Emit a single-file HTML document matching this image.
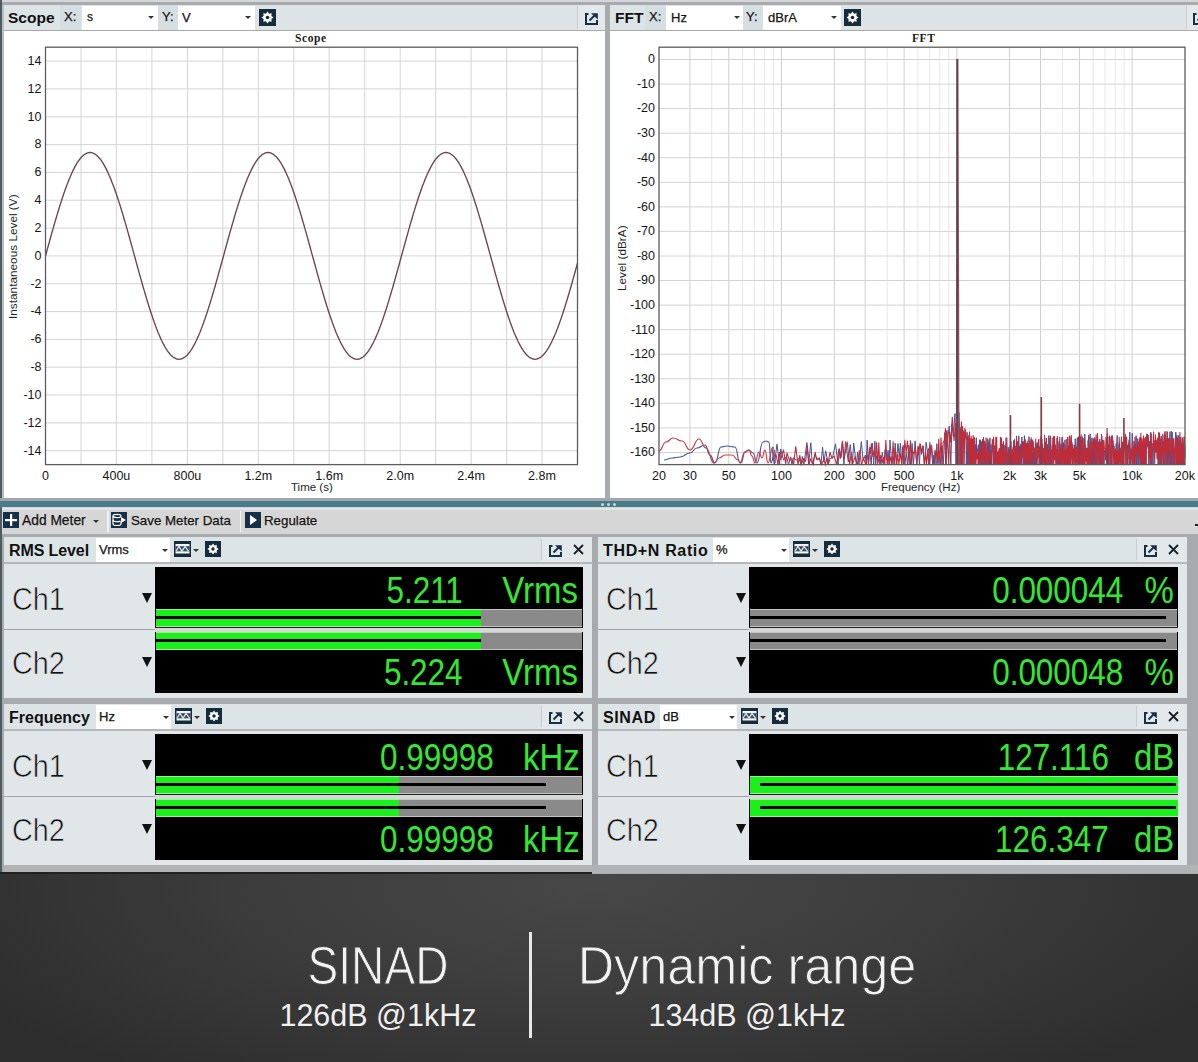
<!DOCTYPE html><html><head><meta charset="utf-8"><style>
*{margin:0;padding:0;box-sizing:border-box}
html,body{width:1198px;height:1062px;overflow:hidden;background:#a7abad;font-family:"Liberation Sans", sans-serif}
.a{position:absolute;white-space:nowrap}
.tk{font-family:"Liberation Sans", sans-serif;font-size:12.5px;fill:#151515}
.hd{background:#dde4e6}
.bt{font-weight:bold;font-size:15.5px;color:#111}
.lbl{font-size:13px;color:#141414;-webkit-text-stroke:0.25px #141414}
.dd{background:#fff}
.ch{font-size:32px;color:#111;-webkit-text-stroke:0.7px #e1e6e8}
.gtxt{font-size:37px;line-height:43px;color:#33e833}
</style></head><body><div class="a" style="left:0;top:0;width:1198px;height:2px;background:#d6d6da"></div><div class="a" style="left:1.5px;top:5px;width:2.5px;height:493px;background:#b8c0c3"></div><div class="a" style="left:0;top:0;width:1.5px;height:874px;background:#4e5c62"></div><div class="a" style="left:4px;top:5px;width:601px;height:25px;background:#dde4e6"></div><div class="a" style="left:4px;top:30px;width:601px;height:1.5px;background:#a9a9a9"></div><div class="a" style="left:4px;top:31px;width:601px;height:467px;background:#fff"></div><div class="a bt" style="left:8px;top:8.5px;">Scope</div><div class="a" style="left:60px;top:5px;width:21px;height:25px;background:#d5dee1"></div><div class="a lbl" style="left:64px;top:9px;">X:</div><div class="a dd" style="left:82px;top:6px;width:76px;height:24px"></div><div class="a lbl" style="left:87px;top:10px;font-size:12px">s</div><div class="a" style="left:148px;top:16px;width:0;height:0;border-left:3px solid transparent;border-right:3px solid transparent;border-top:3px solid #333"></div><div class="a" style="left:158px;top:5px;width:20px;height:25px;background:#d5dee1"></div><div class="a lbl" style="left:162px;top:9px;">Y:</div><div class="a dd" style="left:178px;top:6px;width:77px;height:24px"></div><div class="a lbl" style="left:182px;top:10px;">V</div><div class="a" style="left:245px;top:16px;width:0;height:0;border-left:3px solid transparent;border-right:3px solid transparent;border-top:3px solid #333"></div><div class="a" style="left:258.5px;top:9px"><svg width="17" height="17" viewBox="0 0 16 16"><rect width="16" height="16" fill="#142c3c"/><polygon points="8.00,2.40 9.49,4.40 11.96,4.04 11.60,6.51 13.60,8.00 11.60,9.49 11.96,11.96 9.49,11.60 8.00,13.60 6.51,11.60 4.04,11.96 4.40,9.49 2.40,8.00 4.40,6.51 4.04,4.04 6.51,4.40" fill="#fff"/><circle cx="8" cy="8" r="1.7" fill="#142c3c"/></svg></div><div class="a" style="left:578px;top:5px;width:27px;height:25px;background:#e3e9eb"></div><div class="a" style="left:577px;top:6px;width:1px;height:23px;background:#c8cdd0"></div><div class="a" style="left:585px;top:11px"><svg width="13" height="12" viewBox="0 0 13 12"><path d="M1 2 V11 H12 V7" fill="none" stroke="#16304a" stroke-width="2"/><path d="M0 1 H3.5" stroke="#16304a" stroke-width="2"/><path d="M4.5 7.5 L10 2" stroke="#16304a" stroke-width="1.9"/><path d="M6 0.2 H12.8 V6.5 Z" fill="#16304a"/></svg></div><div class="a" style="left:295px;top:32px;font-family:'Liberation Serif',serif;font-weight:bold;font-size:11.5px;letter-spacing:0.6px;color:#1a1a1a">Scope</div><div class="a" style="left:6px;top:319px;transform:rotate(-90deg);transform-origin:0 0;font-size:11.8px;color:#1e1e1e;white-space:nowrap">Instantaneous Level (V)</div><div class="a" style="left:291px;top:481px;font-size:11.5px;color:#1e1e1e">Time (s)</div><svg class="a" style="left:0;top:0" width="605" height="498"><line x1="81.0" y1="47.2" x2="81.0" y2="464.6" stroke="#d4d4d4" stroke-width="1"/><line x1="116.4" y1="47.2" x2="116.4" y2="464.6" stroke="#d4d4d4" stroke-width="1"/><line x1="151.9" y1="47.2" x2="151.9" y2="464.6" stroke="#d4d4d4" stroke-width="1"/><line x1="187.4" y1="47.2" x2="187.4" y2="464.6" stroke="#d4d4d4" stroke-width="1"/><line x1="222.8" y1="47.2" x2="222.8" y2="464.6" stroke="#d4d4d4" stroke-width="1"/><line x1="258.3" y1="47.2" x2="258.3" y2="464.6" stroke="#d4d4d4" stroke-width="1"/><line x1="293.8" y1="47.2" x2="293.8" y2="464.6" stroke="#d4d4d4" stroke-width="1"/><line x1="329.2" y1="47.2" x2="329.2" y2="464.6" stroke="#d4d4d4" stroke-width="1"/><line x1="364.7" y1="47.2" x2="364.7" y2="464.6" stroke="#d4d4d4" stroke-width="1"/><line x1="400.2" y1="47.2" x2="400.2" y2="464.6" stroke="#d4d4d4" stroke-width="1"/><line x1="435.6" y1="47.2" x2="435.6" y2="464.6" stroke="#d4d4d4" stroke-width="1"/><line x1="471.1" y1="47.2" x2="471.1" y2="464.6" stroke="#d4d4d4" stroke-width="1"/><line x1="506.6" y1="47.2" x2="506.6" y2="464.6" stroke="#d4d4d4" stroke-width="1"/><line x1="542.0" y1="47.2" x2="542.0" y2="464.6" stroke="#d4d4d4" stroke-width="1"/><line x1="45.5" y1="450.7" x2="577.5" y2="450.7" stroke="#d4d4d4" stroke-width="1"/><line x1="45.5" y1="422.9" x2="577.5" y2="422.9" stroke="#d4d4d4" stroke-width="1"/><line x1="45.5" y1="395.0" x2="577.5" y2="395.0" stroke="#d4d4d4" stroke-width="1"/><line x1="45.5" y1="367.2" x2="577.5" y2="367.2" stroke="#d4d4d4" stroke-width="1"/><line x1="45.5" y1="339.4" x2="577.5" y2="339.4" stroke="#d4d4d4" stroke-width="1"/><line x1="45.5" y1="311.6" x2="577.5" y2="311.6" stroke="#d4d4d4" stroke-width="1"/><line x1="45.5" y1="283.7" x2="577.5" y2="283.7" stroke="#d4d4d4" stroke-width="1"/><line x1="45.5" y1="255.9" x2="577.5" y2="255.9" stroke="#d4d4d4" stroke-width="1"/><line x1="45.5" y1="228.1" x2="577.5" y2="228.1" stroke="#d4d4d4" stroke-width="1"/><line x1="45.5" y1="200.2" x2="577.5" y2="200.2" stroke="#d4d4d4" stroke-width="1"/><line x1="45.5" y1="172.4" x2="577.5" y2="172.4" stroke="#d4d4d4" stroke-width="1"/><line x1="45.5" y1="144.6" x2="577.5" y2="144.6" stroke="#d4d4d4" stroke-width="1"/><line x1="45.5" y1="116.8" x2="577.5" y2="116.8" stroke="#d4d4d4" stroke-width="1"/><line x1="45.5" y1="88.9" x2="577.5" y2="88.9" stroke="#d4d4d4" stroke-width="1"/><line x1="45.5" y1="61.1" x2="577.5" y2="61.1" stroke="#d4d4d4" stroke-width="1"/><polyline points="45.5,255.9 46.0,254.1 46.5,252.3 47.0,250.4 47.5,248.6 48.0,246.8 48.5,245.0 49.0,243.2 49.5,241.4 50.0,239.5 50.5,237.7 51.0,236.0 51.5,234.2 52.0,232.4 52.5,230.6 53.0,228.9 53.5,227.1 54.0,225.3 54.5,223.6 55.0,221.9 55.5,220.2 56.0,218.5 56.5,216.8 57.0,215.1 57.5,213.4 58.0,211.8 58.5,210.1 59.0,208.5 59.5,206.9 60.0,205.3 60.5,203.7 61.0,202.1 61.5,200.6 62.0,199.0 62.5,197.5 63.0,196.0 63.5,194.5 64.0,193.1 64.5,191.7 65.0,190.2 65.5,188.8 66.0,187.5 66.5,186.1 67.0,184.8 67.5,183.4 68.0,182.2 68.5,180.9 69.0,179.6 69.5,178.4 70.0,177.2 70.5,176.1 71.0,174.9 71.5,173.8 72.0,172.7 72.5,171.6 73.0,170.6 73.5,169.6 74.0,168.6 74.5,167.6 75.0,166.7 75.5,165.8 76.0,164.9 76.5,164.0 77.0,163.2 77.5,162.4 78.0,161.7 78.5,160.9 79.0,160.2 79.5,159.5 80.0,158.9 80.5,158.3 81.0,157.7 81.5,157.1 82.0,156.6 82.5,156.1 83.0,155.7 83.5,155.2 84.0,154.8 84.5,154.5 85.0,154.1 85.5,153.8 86.0,153.6 86.5,153.3 87.0,153.1 87.5,152.9 88.0,152.8 88.5,152.7 89.0,152.6 89.5,152.5 90.0,152.5 90.5,152.5 91.0,152.6 91.5,152.7 92.0,152.8 92.5,152.9 93.0,153.1 93.5,153.3 94.0,153.6 94.5,153.8 95.0,154.1 95.5,154.5 96.0,154.8 96.5,155.2 97.0,155.7 97.5,156.1 98.0,156.6 98.5,157.1 99.0,157.7 99.5,158.3 100.0,158.9 100.5,159.5 101.0,160.2 101.5,160.9 102.0,161.7 102.5,162.4 103.0,163.2 103.5,164.0 104.0,164.9 104.5,165.8 105.0,166.7 105.5,167.6 106.0,168.6 106.5,169.6 107.0,170.6 107.5,171.6 108.0,172.7 108.5,173.8 109.0,174.9 109.5,176.1 110.0,177.2 110.5,178.4 111.0,179.6 111.5,180.9 112.0,182.2 112.5,183.4 113.0,184.8 113.5,186.1 114.0,187.5 114.5,188.8 115.0,190.2 115.5,191.7 116.0,193.1 116.5,194.5 117.0,196.0 117.5,197.5 118.0,199.0 118.5,200.6 119.0,202.1 119.5,203.7 120.0,205.3 120.5,206.9 121.0,208.5 121.5,210.1 122.0,211.8 122.5,213.4 123.0,215.1 123.5,216.8 124.0,218.5 124.5,220.2 125.0,221.9 125.5,223.6 126.0,225.3 126.5,227.1 127.0,228.9 127.5,230.6 128.0,232.4 128.5,234.2 129.0,236.0 129.5,237.7 130.0,239.5 130.5,241.4 131.0,243.2 131.5,245.0 132.0,246.8 132.5,248.6 133.0,250.4 133.5,252.3 134.0,254.1 134.5,255.9 135.0,257.7 135.5,259.5 136.0,261.4 136.5,263.2 137.0,265.0 137.5,266.8 138.0,268.6 138.5,270.4 139.0,272.3 139.5,274.1 140.0,275.8 140.5,277.6 141.0,279.4 141.5,281.2 142.0,282.9 142.5,284.7 143.0,286.5 143.5,288.2 144.0,289.9 144.5,291.6 145.0,293.3 145.5,295.0 146.0,296.7 146.5,298.4 147.0,300.0 147.5,301.7 148.0,303.3 148.5,304.9 149.0,306.5 149.5,308.1 150.0,309.7 150.5,311.2 151.0,312.8 151.5,314.3 152.0,315.8 152.5,317.3 153.0,318.7 153.5,320.1 154.0,321.6 154.5,323.0 155.0,324.3 155.5,325.7 156.0,327.0 156.5,328.4 157.0,329.6 157.5,330.9 158.0,332.2 158.5,333.4 159.0,334.6 159.5,335.7 160.0,336.9 160.5,338.0 161.0,339.1 161.5,340.2 162.0,341.2 162.5,342.2 163.0,343.2 163.5,344.2 164.0,345.1 164.5,346.0 165.0,346.9 165.5,347.8 166.0,348.6 166.5,349.4 167.0,350.1 167.5,350.9 168.0,351.6 168.5,352.3 169.0,352.9 169.5,353.5 170.0,354.1 170.5,354.7 171.0,355.2 171.5,355.7 172.0,356.1 172.5,356.6 173.0,357.0 173.5,357.3 174.0,357.7 174.5,358.0 175.0,358.2 175.5,358.5 176.0,358.7 176.5,358.9 177.0,359.0 177.5,359.1 178.0,359.2 178.5,359.3 179.0,359.3 179.5,359.3 180.0,359.2 180.5,359.1 181.0,359.0 181.5,358.9 182.0,358.7 182.5,358.5 183.0,358.2 183.5,358.0 184.0,357.7 184.5,357.3 185.0,357.0 185.5,356.6 186.0,356.1 186.5,355.7 187.0,355.2 187.5,354.7 188.0,354.1 188.5,353.5 189.0,352.9 189.5,352.3 190.0,351.6 190.5,350.9 191.0,350.1 191.5,349.4 192.0,348.6 192.5,347.8 193.0,346.9 193.5,346.0 194.0,345.1 194.5,344.2 195.0,343.2 195.5,342.2 196.0,341.2 196.5,340.2 197.0,339.1 197.5,338.0 198.0,336.9 198.5,335.7 199.0,334.6 199.5,333.4 200.0,332.2 200.5,330.9 201.0,329.6 201.5,328.4 202.0,327.0 202.5,325.7 203.0,324.3 203.5,323.0 204.0,321.6 204.5,320.1 205.0,318.7 205.5,317.3 206.0,315.8 206.5,314.3 207.0,312.8 207.5,311.2 208.0,309.7 208.5,308.1 209.0,306.5 209.5,304.9 210.0,303.3 210.5,301.7 211.0,300.0 211.5,298.4 212.0,296.7 212.5,295.0 213.0,293.3 213.5,291.6 214.0,289.9 214.5,288.2 215.0,286.5 215.5,284.7 216.0,282.9 216.5,281.2 217.0,279.4 217.5,277.6 218.0,275.8 218.5,274.1 219.0,272.3 219.5,270.4 220.0,268.6 220.5,266.8 221.0,265.0 221.5,263.2 222.0,261.4 222.5,259.5 223.0,257.7 223.5,255.9 224.0,254.1 224.5,252.3 225.0,250.4 225.5,248.6 226.0,246.8 226.5,245.0 227.0,243.2 227.5,241.4 228.0,239.5 228.5,237.7 229.0,236.0 229.5,234.2 230.0,232.4 230.5,230.6 231.0,228.9 231.5,227.1 232.0,225.3 232.5,223.6 233.0,221.9 233.5,220.2 234.0,218.5 234.5,216.8 235.0,215.1 235.5,213.4 236.0,211.8 236.5,210.1 237.0,208.5 237.5,206.9 238.0,205.3 238.5,203.7 239.0,202.1 239.5,200.6 240.0,199.0 240.5,197.5 241.0,196.0 241.5,194.5 242.0,193.1 242.5,191.7 243.0,190.2 243.5,188.8 244.0,187.5 244.5,186.1 245.0,184.8 245.5,183.4 246.0,182.2 246.5,180.9 247.0,179.6 247.5,178.4 248.0,177.2 248.5,176.1 249.0,174.9 249.5,173.8 250.0,172.7 250.5,171.6 251.0,170.6 251.5,169.6 252.0,168.6 252.5,167.6 253.0,166.7 253.5,165.8 254.0,164.9 254.5,164.0 255.0,163.2 255.5,162.4 256.0,161.7 256.5,160.9 257.0,160.2 257.5,159.5 258.0,158.9 258.5,158.3 259.0,157.7 259.5,157.1 260.0,156.6 260.5,156.1 261.0,155.7 261.5,155.2 262.0,154.8 262.5,154.5 263.0,154.1 263.5,153.8 264.0,153.6 264.5,153.3 265.0,153.1 265.5,152.9 266.0,152.8 266.5,152.7 267.0,152.6 267.5,152.5 268.0,152.5 268.5,152.5 269.0,152.6 269.5,152.7 270.0,152.8 270.5,152.9 271.0,153.1 271.5,153.3 272.0,153.6 272.5,153.8 273.0,154.1 273.5,154.5 274.0,154.8 274.5,155.2 275.0,155.7 275.5,156.1 276.0,156.6 276.5,157.1 277.0,157.7 277.5,158.3 278.0,158.9 278.5,159.5 279.0,160.2 279.5,160.9 280.0,161.7 280.5,162.4 281.0,163.2 281.5,164.0 282.0,164.9 282.5,165.8 283.0,166.7 283.5,167.6 284.0,168.6 284.5,169.6 285.0,170.6 285.5,171.6 286.0,172.7 286.5,173.8 287.0,174.9 287.5,176.1 288.0,177.2 288.5,178.4 289.0,179.6 289.5,180.9 290.0,182.2 290.5,183.4 291.0,184.8 291.5,186.1 292.0,187.5 292.5,188.8 293.0,190.2 293.5,191.7 294.0,193.1 294.5,194.5 295.0,196.0 295.5,197.5 296.0,199.0 296.5,200.6 297.0,202.1 297.5,203.7 298.0,205.3 298.5,206.9 299.0,208.5 299.5,210.1 300.0,211.8 300.5,213.4 301.0,215.1 301.5,216.8 302.0,218.5 302.5,220.2 303.0,221.9 303.5,223.6 304.0,225.3 304.5,227.1 305.0,228.9 305.5,230.6 306.0,232.4 306.5,234.2 307.0,236.0 307.5,237.7 308.0,239.5 308.5,241.4 309.0,243.2 309.5,245.0 310.0,246.8 310.5,248.6 311.0,250.4 311.5,252.3 312.0,254.1 312.5,255.9 313.0,257.7 313.5,259.5 314.0,261.4 314.5,263.2 315.0,265.0 315.5,266.8 316.0,268.6 316.5,270.4 317.0,272.3 317.5,274.1 318.0,275.8 318.5,277.6 319.0,279.4 319.5,281.2 320.0,282.9 320.5,284.7 321.0,286.5 321.5,288.2 322.0,289.9 322.5,291.6 323.0,293.3 323.5,295.0 324.0,296.7 324.5,298.4 325.0,300.0 325.5,301.7 326.0,303.3 326.5,304.9 327.0,306.5 327.5,308.1 328.0,309.7 328.5,311.2 329.0,312.8 329.5,314.3 330.0,315.8 330.5,317.3 331.0,318.7 331.5,320.1 332.0,321.6 332.5,323.0 333.0,324.3 333.5,325.7 334.0,327.0 334.5,328.4 335.0,329.6 335.5,330.9 336.0,332.2 336.5,333.4 337.0,334.6 337.5,335.7 338.0,336.9 338.5,338.0 339.0,339.1 339.5,340.2 340.0,341.2 340.5,342.2 341.0,343.2 341.5,344.2 342.0,345.1 342.5,346.0 343.0,346.9 343.5,347.8 344.0,348.6 344.5,349.4 345.0,350.1 345.5,350.9 346.0,351.6 346.5,352.3 347.0,352.9 347.5,353.5 348.0,354.1 348.5,354.7 349.0,355.2 349.5,355.7 350.0,356.1 350.5,356.6 351.0,357.0 351.5,357.3 352.0,357.7 352.5,358.0 353.0,358.2 353.5,358.5 354.0,358.7 354.5,358.9 355.0,359.0 355.5,359.1 356.0,359.2 356.5,359.3 357.0,359.3 357.5,359.3 358.0,359.2 358.5,359.1 359.0,359.0 359.5,358.9 360.0,358.7 360.5,358.5 361.0,358.2 361.5,358.0 362.0,357.7 362.5,357.3 363.0,357.0 363.5,356.6 364.0,356.1 364.5,355.7 365.0,355.2 365.5,354.7 366.0,354.1 366.5,353.5 367.0,352.9 367.5,352.3 368.0,351.6 368.5,350.9 369.0,350.1 369.5,349.4 370.0,348.6 370.5,347.8 371.0,346.9 371.5,346.0 372.0,345.1 372.5,344.2 373.0,343.2 373.5,342.2 374.0,341.2 374.5,340.2 375.0,339.1 375.5,338.0 376.0,336.9 376.5,335.7 377.0,334.6 377.5,333.4 378.0,332.2 378.5,330.9 379.0,329.6 379.5,328.4 380.0,327.0 380.5,325.7 381.0,324.3 381.5,323.0 382.0,321.6 382.5,320.1 383.0,318.7 383.5,317.3 384.0,315.8 384.5,314.3 385.0,312.8 385.5,311.2 386.0,309.7 386.5,308.1 387.0,306.5 387.5,304.9 388.0,303.3 388.5,301.7 389.0,300.0 389.5,298.4 390.0,296.7 390.5,295.0 391.0,293.3 391.5,291.6 392.0,289.9 392.5,288.2 393.0,286.5 393.5,284.7 394.0,282.9 394.5,281.2 395.0,279.4 395.5,277.6 396.0,275.8 396.5,274.1 397.0,272.3 397.5,270.4 398.0,268.6 398.5,266.8 399.0,265.0 399.5,263.2 400.0,261.4 400.5,259.5 401.0,257.7 401.5,255.9 402.0,254.1 402.5,252.3 403.0,250.4 403.5,248.6 404.0,246.8 404.5,245.0 405.0,243.2 405.5,241.4 406.0,239.5 406.5,237.7 407.0,236.0 407.5,234.2 408.0,232.4 408.5,230.6 409.0,228.9 409.5,227.1 410.0,225.3 410.5,223.6 411.0,221.9 411.5,220.2 412.0,218.5 412.5,216.8 413.0,215.1 413.5,213.4 414.0,211.8 414.5,210.1 415.0,208.5 415.5,206.9 416.0,205.3 416.5,203.7 417.0,202.1 417.5,200.6 418.0,199.0 418.5,197.5 419.0,196.0 419.5,194.5 420.0,193.1 420.5,191.7 421.0,190.2 421.5,188.8 422.0,187.5 422.5,186.1 423.0,184.8 423.5,183.4 424.0,182.2 424.5,180.9 425.0,179.6 425.5,178.4 426.0,177.2 426.5,176.1 427.0,174.9 427.5,173.8 428.0,172.7 428.5,171.6 429.0,170.6 429.5,169.6 430.0,168.6 430.5,167.6 431.0,166.7 431.5,165.8 432.0,164.9 432.5,164.0 433.0,163.2 433.5,162.4 434.0,161.7 434.5,160.9 435.0,160.2 435.5,159.5 436.0,158.9 436.5,158.3 437.0,157.7 437.5,157.1 438.0,156.6 438.5,156.1 439.0,155.7 439.5,155.2 440.0,154.8 440.5,154.5 441.0,154.1 441.5,153.8 442.0,153.6 442.5,153.3 443.0,153.1 443.5,152.9 444.0,152.8 444.5,152.7 445.0,152.6 445.5,152.5 446.0,152.5 446.5,152.5 447.0,152.6 447.5,152.7 448.0,152.8 448.5,152.9 449.0,153.1 449.5,153.3 450.0,153.6 450.5,153.8 451.0,154.1 451.5,154.5 452.0,154.8 452.5,155.2 453.0,155.7 453.5,156.1 454.0,156.6 454.5,157.1 455.0,157.7 455.5,158.3 456.0,158.9 456.5,159.5 457.0,160.2 457.5,160.9 458.0,161.7 458.5,162.4 459.0,163.2 459.5,164.0 460.0,164.9 460.5,165.8 461.0,166.7 461.5,167.6 462.0,168.6 462.5,169.6 463.0,170.6 463.5,171.6 464.0,172.7 464.5,173.8 465.0,174.9 465.5,176.1 466.0,177.2 466.5,178.4 467.0,179.6 467.5,180.9 468.0,182.2 468.5,183.4 469.0,184.8 469.5,186.1 470.0,187.5 470.5,188.8 471.0,190.2 471.5,191.7 472.0,193.1 472.5,194.5 473.0,196.0 473.5,197.5 474.0,199.0 474.5,200.6 475.0,202.1 475.5,203.7 476.0,205.3 476.5,206.9 477.0,208.5 477.5,210.1 478.0,211.8 478.5,213.4 479.0,215.1 479.5,216.8 480.0,218.5 480.5,220.2 481.0,221.9 481.5,223.6 482.0,225.3 482.5,227.1 483.0,228.9 483.5,230.6 484.0,232.4 484.5,234.2 485.0,236.0 485.5,237.7 486.0,239.5 486.5,241.4 487.0,243.2 487.5,245.0 488.0,246.8 488.5,248.6 489.0,250.4 489.5,252.3 490.0,254.1 490.5,255.9 491.0,257.7 491.5,259.5 492.0,261.4 492.5,263.2 493.0,265.0 493.5,266.8 494.0,268.6 494.5,270.4 495.0,272.3 495.5,274.1 496.0,275.8 496.5,277.6 497.0,279.4 497.5,281.2 498.0,282.9 498.5,284.7 499.0,286.5 499.5,288.2 500.0,289.9 500.5,291.6 501.0,293.3 501.5,295.0 502.0,296.7 502.5,298.4 503.0,300.0 503.5,301.7 504.0,303.3 504.5,304.9 505.0,306.5 505.5,308.1 506.0,309.7 506.5,311.2 507.0,312.8 507.5,314.3 508.0,315.8 508.5,317.3 509.0,318.7 509.5,320.1 510.0,321.6 510.5,323.0 511.0,324.3 511.5,325.7 512.0,327.0 512.5,328.4 513.0,329.6 513.5,330.9 514.0,332.2 514.5,333.4 515.0,334.6 515.5,335.7 516.0,336.9 516.5,338.0 517.0,339.1 517.5,340.2 518.0,341.2 518.5,342.2 519.0,343.2 519.5,344.2 520.0,345.1 520.5,346.0 521.0,346.9 521.5,347.8 522.0,348.6 522.5,349.4 523.0,350.1 523.5,350.9 524.0,351.6 524.5,352.3 525.0,352.9 525.5,353.5 526.0,354.1 526.5,354.7 527.0,355.2 527.5,355.7 528.0,356.1 528.5,356.6 529.0,357.0 529.5,357.3 530.0,357.7 530.5,358.0 531.0,358.2 531.5,358.5 532.0,358.7 532.5,358.9 533.0,359.0 533.5,359.1 534.0,359.2 534.5,359.3 535.0,359.3 535.5,359.3 536.0,359.2 536.5,359.1 537.0,359.0 537.5,358.9 538.0,358.7 538.5,358.5 539.0,358.2 539.5,358.0 540.0,357.7 540.5,357.3 541.0,357.0 541.5,356.6 542.0,356.1 542.5,355.7 543.0,355.2 543.5,354.7 544.0,354.1 544.5,353.5 545.0,352.9 545.5,352.3 546.0,351.6 546.5,350.9 547.0,350.1 547.5,349.4 548.0,348.6 548.5,347.8 549.0,346.9 549.5,346.0 550.0,345.1 550.5,344.2 551.0,343.2 551.5,342.2 552.0,341.2 552.5,340.2 553.0,339.1 553.5,338.0 554.0,336.9 554.5,335.7 555.0,334.6 555.5,333.4 556.0,332.2 556.5,330.9 557.0,329.6 557.5,328.4 558.0,327.0 558.5,325.7 559.0,324.3 559.5,323.0 560.0,321.6 560.5,320.1 561.0,318.7 561.5,317.3 562.0,315.8 562.5,314.3 563.0,312.8 563.5,311.2 564.0,309.7 564.5,308.1 565.0,306.5 565.5,304.9 566.0,303.3 566.5,301.7 567.0,300.0 567.5,298.4 568.0,296.7 568.5,295.0 569.0,293.3 569.5,291.6 570.0,289.9 570.5,288.2 571.0,286.5 571.5,284.7 572.0,282.9 572.5,281.2 573.0,279.4 573.5,277.6 574.0,275.8 574.5,274.1 575.0,272.3 575.5,270.4 576.0,268.6 576.5,266.8 577.0,265.0 577.5,263.2" fill="none" stroke="#6c4250" stroke-width="1.35"/><rect x="45.5" y="47.2" width="532.0" height="417.40000000000003" fill="none" stroke="#5c5c5c" stroke-width="1.3"/><text x="41.5" y="454.5" text-anchor="end" class="tk">-14</text><text x="41.5" y="426.7" text-anchor="end" class="tk">-12</text><text x="41.5" y="398.8" text-anchor="end" class="tk">-10</text><text x="41.5" y="371.0" text-anchor="end" class="tk">-8</text><text x="41.5" y="343.2" text-anchor="end" class="tk">-6</text><text x="41.5" y="315.4" text-anchor="end" class="tk">-4</text><text x="41.5" y="287.5" text-anchor="end" class="tk">-2</text><text x="41.5" y="259.7" text-anchor="end" class="tk">0</text><text x="41.5" y="231.9" text-anchor="end" class="tk">2</text><text x="41.5" y="204.0" text-anchor="end" class="tk">4</text><text x="41.5" y="176.2" text-anchor="end" class="tk">6</text><text x="41.5" y="148.4" text-anchor="end" class="tk">8</text><text x="41.5" y="120.6" text-anchor="end" class="tk">10</text><text x="41.5" y="92.7" text-anchor="end" class="tk">12</text><text x="41.5" y="64.9" text-anchor="end" class="tk">14</text><text x="45.5" y="480" text-anchor="middle" class="tk">0</text><text x="116.4" y="480" text-anchor="middle" class="tk">400u</text><text x="187.4" y="480" text-anchor="middle" class="tk">800u</text><text x="258.3" y="480" text-anchor="middle" class="tk">1.2m</text><text x="329.2" y="480" text-anchor="middle" class="tk">1.6m</text><text x="400.2" y="480" text-anchor="middle" class="tk">2.0m</text><text x="471.1" y="480" text-anchor="middle" class="tk">2.4m</text><text x="542.0" y="480" text-anchor="middle" class="tk">2.8m</text></svg><div class="a" style="left:610px;top:5px;width:588px;height:25px;background:#dde4e6"></div><div class="a" style="left:610px;top:30px;width:588px;height:1.5px;background:#a9a9a9"></div><div class="a" style="left:610px;top:31px;width:588px;height:467px;background:#fff"></div><div class="a bt" style="left:615px;top:8.5px;">FFT</div><div class="a" style="left:645px;top:5px;width:21px;height:25px;background:#d5dee1"></div><div class="a lbl" style="left:649px;top:9px;">X:</div><div class="a dd" style="left:666px;top:6px;width:78px;height:24px"></div><div class="a lbl" style="left:671px;top:10px;">Hz</div><div class="a" style="left:734px;top:16px;width:0;height:0;border-left:3px solid transparent;border-right:3px solid transparent;border-top:3px solid #333"></div><div class="a" style="left:743px;top:5px;width:20px;height:25px;background:#d5dee1"></div><div class="a lbl" style="left:746px;top:9px;">Y:</div><div class="a dd" style="left:763px;top:6px;width:78px;height:24px"></div><div class="a lbl" style="left:768px;top:10px;">dBrA</div><div class="a" style="left:831px;top:16px;width:0;height:0;border-left:3px solid transparent;border-right:3px solid transparent;border-top:3px solid #333"></div><div class="a" style="left:844px;top:9px"><svg width="17" height="17" viewBox="0 0 16 16"><rect width="16" height="16" fill="#142c3c"/><polygon points="8.00,2.40 9.49,4.40 11.96,4.04 11.60,6.51 13.60,8.00 11.60,9.49 11.96,11.96 9.49,11.60 8.00,13.60 6.51,11.60 4.04,11.96 4.40,9.49 2.40,8.00 4.40,6.51 4.04,4.04 6.51,4.40" fill="#fff"/><circle cx="8" cy="8" r="1.7" fill="#142c3c"/></svg></div><div class="a" style="left:1187px;top:5px;width:11px;height:25px;background:#e3e9eb"></div><div class="a" style="left:1186px;top:6px;width:1px;height:23px;background:#c8cdd0"></div><div class="a" style="left:1193px;top:11px"><svg width="13" height="12" viewBox="0 0 13 12"><path d="M1 2 V11 H12 V7" fill="none" stroke="#16304a" stroke-width="2"/><path d="M0 1 H3.5" stroke="#16304a" stroke-width="2"/><path d="M4.5 7.5 L10 2" stroke="#16304a" stroke-width="1.9"/><path d="M6 0.2 H12.8 V6.5 Z" fill="#16304a"/></svg></div><div class="a" style="left:912px;top:32px;font-family:'Liberation Serif',serif;font-weight:bold;font-size:11.5px;letter-spacing:0.6px;color:#1a1a1a">FFT</div><div class="a" style="left:615px;top:290.5px;transform:rotate(-90deg);transform-origin:0 0;font-size:11.8px;color:#1e1e1e;white-space:nowrap">Level (dBrA)</div><div class="a" style="left:881px;top:481px;font-size:11.5px;color:#1e1e1e">Frequency (Hz)</div><svg class="a" style="left:0;top:0" width="1198" height="498"><line x1="689.9" y1="47.2" x2="689.9" y2="464.6" stroke="#cfcfcf" stroke-width="1"/><line x1="711.8" y1="47.2" x2="711.8" y2="464.6" stroke="#e6e6e6" stroke-width="1"/><line x1="728.8" y1="47.2" x2="728.8" y2="464.6" stroke="#cfcfcf" stroke-width="1"/><line x1="742.6" y1="47.2" x2="742.6" y2="464.6" stroke="#e6e6e6" stroke-width="1"/><line x1="754.4" y1="47.2" x2="754.4" y2="464.6" stroke="#e6e6e6" stroke-width="1"/><line x1="764.5" y1="47.2" x2="764.5" y2="464.6" stroke="#e6e6e6" stroke-width="1"/><line x1="773.5" y1="47.2" x2="773.5" y2="464.6" stroke="#e6e6e6" stroke-width="1"/><line x1="781.5" y1="47.2" x2="781.5" y2="464.6" stroke="#cfcfcf" stroke-width="1"/><line x1="834.3" y1="47.2" x2="834.3" y2="464.6" stroke="#cfcfcf" stroke-width="1"/><line x1="865.2" y1="47.2" x2="865.2" y2="464.6" stroke="#cfcfcf" stroke-width="1"/><line x1="887.1" y1="47.2" x2="887.1" y2="464.6" stroke="#e6e6e6" stroke-width="1"/><line x1="904.1" y1="47.2" x2="904.1" y2="464.6" stroke="#cfcfcf" stroke-width="1"/><line x1="917.9" y1="47.2" x2="917.9" y2="464.6" stroke="#e6e6e6" stroke-width="1"/><line x1="929.7" y1="47.2" x2="929.7" y2="464.6" stroke="#e6e6e6" stroke-width="1"/><line x1="939.8" y1="47.2" x2="939.8" y2="464.6" stroke="#e6e6e6" stroke-width="1"/><line x1="948.8" y1="47.2" x2="948.8" y2="464.6" stroke="#e6e6e6" stroke-width="1"/><line x1="956.8" y1="47.2" x2="956.8" y2="464.6" stroke="#cfcfcf" stroke-width="1"/><line x1="1009.6" y1="47.2" x2="1009.6" y2="464.6" stroke="#cfcfcf" stroke-width="1"/><line x1="1040.5" y1="47.2" x2="1040.5" y2="464.6" stroke="#cfcfcf" stroke-width="1"/><line x1="1062.4" y1="47.2" x2="1062.4" y2="464.6" stroke="#e6e6e6" stroke-width="1"/><line x1="1079.4" y1="47.2" x2="1079.4" y2="464.6" stroke="#cfcfcf" stroke-width="1"/><line x1="1093.2" y1="47.2" x2="1093.2" y2="464.6" stroke="#e6e6e6" stroke-width="1"/><line x1="1105.0" y1="47.2" x2="1105.0" y2="464.6" stroke="#e6e6e6" stroke-width="1"/><line x1="1115.1" y1="47.2" x2="1115.1" y2="464.6" stroke="#e6e6e6" stroke-width="1"/><line x1="1124.1" y1="47.2" x2="1124.1" y2="464.6" stroke="#e6e6e6" stroke-width="1"/><line x1="1132.1" y1="47.2" x2="1132.1" y2="464.6" stroke="#cfcfcf" stroke-width="1"/><line x1="659" y1="59.5" x2="1185" y2="59.5" stroke="#d4d4d4" stroke-width="1"/><line x1="659" y1="84.1" x2="1185" y2="84.1" stroke="#d4d4d4" stroke-width="1"/><line x1="659" y1="108.6" x2="1185" y2="108.6" stroke="#d4d4d4" stroke-width="1"/><line x1="659" y1="133.2" x2="1185" y2="133.2" stroke="#d4d4d4" stroke-width="1"/><line x1="659" y1="157.7" x2="1185" y2="157.7" stroke="#d4d4d4" stroke-width="1"/><line x1="659" y1="182.3" x2="1185" y2="182.3" stroke="#d4d4d4" stroke-width="1"/><line x1="659" y1="206.9" x2="1185" y2="206.9" stroke="#d4d4d4" stroke-width="1"/><line x1="659" y1="231.4" x2="1185" y2="231.4" stroke="#d4d4d4" stroke-width="1"/><line x1="659" y1="256.0" x2="1185" y2="256.0" stroke="#d4d4d4" stroke-width="1"/><line x1="659" y1="280.5" x2="1185" y2="280.5" stroke="#d4d4d4" stroke-width="1"/><line x1="659" y1="305.1" x2="1185" y2="305.1" stroke="#d4d4d4" stroke-width="1"/><line x1="659" y1="329.7" x2="1185" y2="329.7" stroke="#d4d4d4" stroke-width="1"/><line x1="659" y1="354.2" x2="1185" y2="354.2" stroke="#d4d4d4" stroke-width="1"/><line x1="659" y1="378.8" x2="1185" y2="378.8" stroke="#d4d4d4" stroke-width="1"/><line x1="659" y1="403.3" x2="1185" y2="403.3" stroke="#d4d4d4" stroke-width="1"/><line x1="659" y1="427.9" x2="1185" y2="427.9" stroke="#d4d4d4" stroke-width="1"/><line x1="659" y1="452.5" x2="1185" y2="452.5" stroke="#d4d4d4" stroke-width="1"/><path d="M664 460 C668.0 460 668.0 458 672 458 C676.0 458 676.0 457 680 457 C685.0 457 685.0 453 690 453 C693.5 453 693.5 448 697 448 C701.0 448 701.0 445 705 445 C707.5 445 707.5 455 710 455 C712.5 455 712.5 463 715 463 C718.0 463 718.0 447 721 447 C724.0 447 724.0 446 727 446 C731.0 446 731.0 447 735 447 C737.5 447 737.5 463 740 463 C742.5 463 742.5 452 745 452 C747.0 452 747.0 450 749 450 C751.0 450 751.0 453 753 453 C755.0 453 755.0 463 757 463 C760.0 463 760.0 442 763 442 C764.5 442 764.5 441 766 441 C767.5 441 767.5 442 769 442 C770.0 442 770.0 463 771 463 C773.0 463 773.0 450 775 450" fill="none" stroke="#4a5a9c" stroke-width="1.2"/><path d="M659 451 C662.5 451 662.5 442 666 442 C669.5 442 669.5 438 673 438 C677.5 438 677.5 441 682 441 C686.0 441 686.0 450 690 450 C694.5 450 694.5 439 699 439 C702.5 439 702.5 448 706 448 C710.0 448 710.0 463 714 463 C716.5 463 716.5 458 719 458 C722.0 458 722.0 455 725 455 C728.5 455 728.5 455 732 455 C735.0 455 735.0 460 738 460 C739.5 460 739.5 463 741 463 C743.0 463 743.0 452 745 452 C747.0 452 747.0 450 749 450 C750.5 450 750.5 456 752 456 C753.5 456 753.5 463 755 463 C757.0 463 757.0 452 759 452 C760.5 452 760.5 458 762 458 C763.5 458 763.5 450 765 450 C766.5 450 766.5 463 768 463 C770.5 463 770.5 447 773 447 C774.5 447 774.5 463 776 463" fill="none" stroke="#c8404a" stroke-width="1.2"/><path d="M772.0 447.7L774.3 464.6L777.0 444.2L779.5 464.6L780.7 449.1L783.6 460.2L786.5 456.4L788.5 464.6L790.7 456.8L791.9 464.6L793.6 457.7L796.2 460.2L798.8 458.2L801.1 464.6L802.3 456.4L803.9 464.6L806.9 442.6L808.6 464.6L810.8 442.8L812.3 464.6L814.8 454.5L817.6 459.9L819.4 458.7L820.9 464.6L822.6 447.3L823.9 461.9L825.7 450.8L828.3 464.2L830.1 458.5L832.6 457.4L835.5 443.8L838.1 464.6L839.3 448.6L841.2 457.5L842.4 441.6L843.9 464.6L845.5 441.7L848.3 461.8L850.2 444.7L852.3 464.6L853.7 443.0L856.3 464.6L857.6 452.4L859.0 464.6L861.3 441.6L863.1 460.7L865.3 455.2L866.3 464.6L867.1 440.1L868.5 464.6L869.4 448.5L871.2 464.6L872.4 443.0L873.7 464.6L874.9 441.3L875.7 464.6L876.4 455.7L878.0 462.5L879.5 456.1L881.1 464.6L882.3 452.5L883.9 464.6L885.1 449.5L886.9 460.0L888.1 450.3L889.1 464.6L890.0 440.0L891.8 464.6L893.2 456.0L894.2 464.6L895.2 443.1L896.3 464.6L897.9 443.5L899.3 456.7L900.4 443.2L901.7 464.6L903.1 445.3L904.9 464.6L906.2 452.6L907.5 464.6L908.9 445.2L910.5 464.6L912.1 443.4L913.5 464.6L915.1 440.9L916.8 464.6L918.2 447.1L919.5 464.6L920.4 444.0L921.6 454.4L923.1 446.0L924.6 464.6L926.1 442.3L927.5 452.1L928.9 448.4L929.7 464.6L931.2 444.8L932.6 464.6L933.4 455.4L934.3 464.6L935.2 452.8L936.1 464.6L936.8 443.7L937.9 464.6L939.3 451.6L941.0 464.6L942.1 445.6L943.3 464.6L944.9 432.6L945.6 464.6L946.4 431.1L947.5 441.6L949.2 426.2L950.8 464.6L951.9 423.9L953.3 436.5L955.0 413.6L956.1 464.6L956.8 416.3L957.4 464.6L957.8 421.9L958.5 464.6L959.0 412.6L959.4 439.6L959.9 426.9L960.5 464.6L961.3 427.6L961.8 464.6L962.6 426.4L963.0 464.6L963.4 430.7L963.9 432.1L964.6 432.7L965.1 437.1L965.9 436.6L966.3 464.6L967.1 432.3L967.7 464.6L968.3 440.4L969.0 464.6L969.6 438.1L970.2 464.6L970.6 439.0L971.2 464.6L971.8 442.5L972.1 455.7L972.6 447.9L973.2 464.6L973.9 436.8L974.5 464.6L975.1 444.3L975.8 450.3L976.3 437.7L976.7 458.9L977.1 448.7L977.6 451.8L978.3 444.9L978.8 464.6L979.3 444.2L979.7 464.6L980.4 439.8L980.8 464.6L981.5 441.6L981.8 460.3L982.6 439.3L982.9 464.6L983.3 441.7L984.0 464.6L984.4 452.0L985.1 464.6L985.7 443.3L986.1 464.6L986.4 453.4L986.9 464.6L987.2 438.5L987.9 464.6L988.2 443.6L988.7 455.3L989.2 441.8L989.5 464.6L989.9 437.9L990.4 464.6L991.0 444.4L991.4 457.3L991.8 450.3L992.1 452.3L992.6 442.5L993.3 464.6L993.6 452.2L993.9 464.6L994.5 445.6L995.2 450.0L995.7 453.5L996.3 459.6L996.7 452.3L997.1 464.6L997.9 451.8L998.6 464.6L999.2 448.2L999.6 464.6L1000.2 451.8L1000.7 464.6L1001.4 446.3L1002.1 464.6L1002.8 443.7L1003.4 464.6L1004.1 453.6L1004.4 464.6L1004.8 445.3L1005.5 464.6L1006.2 437.7L1006.7 464.6L1007.3 452.3L1007.9 464.6L1008.2 447.0L1008.7 464.6L1009.4 448.9L1009.8 464.6L1010.2 445.1L1010.6 454.5L1010.9 441.3L1011.7 464.6L1012.3 451.8L1013.1 464.6L1013.7 440.5L1014.3 464.6L1014.7 449.6L1015.0 464.6L1015.3 447.1L1016.1 464.6L1016.5 440.3L1017.0 464.6L1017.6 441.4L1018.0 464.6L1018.8 435.8L1019.3 464.6L1019.6 446.2L1020.3 464.6L1020.6 444.1L1021.4 464.6L1021.8 437.1L1022.1 449.5L1022.7 452.7L1023.1 464.6L1023.6 446.1L1024.0 464.6L1024.4 435.7L1024.7 464.6L1025.1 443.8L1025.6 464.6L1025.9 443.5L1026.2 464.6L1027.0 449.5L1027.7 464.6L1028.0 442.9L1028.5 464.6L1029.0 436.6L1029.7 464.6L1030.1 449.3L1030.8 464.6L1031.2 439.1L1031.5 464.6L1032.2 451.8L1032.6 464.6L1033.0 442.7L1033.5 464.6L1033.9 452.4L1034.5 464.6L1034.9 451.4L1035.4 464.6L1035.9 443.0L1036.5 464.6L1037.3 442.6L1038.0 457.9L1038.5 439.7L1039.2 464.6L1039.9 446.0L1040.6 464.6L1040.9 448.2L1041.3 464.6L1041.9 439.0L1042.3 464.6L1042.8 450.6L1043.1 462.1L1043.6 448.7L1044.2 464.6L1044.7 452.7L1045.1 458.7L1045.7 443.1L1046.1 454.6L1046.4 438.3L1047.2 464.6L1047.5 444.4L1048.3 464.6L1048.8 435.6L1049.5 456.7L1050.0 437.8L1050.4 464.6L1050.9 452.1L1051.7 464.6L1052.2 445.5L1053.0 464.6L1053.4 442.3L1053.8 451.3L1054.2 448.1L1054.7 460.2L1055.5 445.2L1056.1 454.9L1056.4 449.5L1056.7 460.9L1057.1 437.9L1057.4 464.6L1057.9 441.1L1058.6 464.6L1059.3 443.1L1059.6 464.6L1060.2 446.6L1060.7 464.6L1061.0 443.7L1061.4 464.6L1062.1 437.4L1062.9 464.6L1063.6 442.5L1064.3 464.6L1065.0 439.8L1065.6 464.6L1066.1 450.7L1066.4 464.6L1066.9 439.1L1067.6 451.4L1068.0 450.9L1068.7 464.6L1069.3 435.7L1070.1 458.1L1070.7 448.3L1071.3 450.7L1071.9 442.1L1072.7 464.6L1073.2 448.8L1073.6 460.6L1074.3 444.9L1074.9 464.6L1075.2 438.8L1075.8 450.2L1076.2 447.0L1076.7 449.5L1077.3 437.8L1077.9 464.6L1078.3 436.6L1078.9 453.1L1079.6 442.1L1080.1 464.6L1080.9 440.7L1081.3 464.6L1082.1 449.7L1082.4 464.6L1082.9 448.3L1083.3 464.6L1083.9 438.3L1084.5 464.6L1084.8 434.1L1085.6 456.3L1086.0 447.5L1086.8 453.8L1087.4 448.1L1087.7 464.6L1088.1 440.3L1088.5 457.5L1088.8 436.8L1089.5 460.8L1090.2 433.8L1090.8 464.6L1091.1 447.7L1091.4 464.6L1091.9 437.8L1092.5 464.6L1092.8 444.5L1093.4 464.6L1093.7 438.8L1094.2 460.4L1094.8 437.4L1095.1 464.6L1095.7 442.5L1096.1 460.0L1096.5 446.0L1097.0 464.6L1097.5 440.7L1098.2 464.6L1098.7 441.7L1099.4 464.6L1099.7 439.0L1100.1 464.6L1100.4 442.4L1100.8 464.6L1101.5 434.0L1102.0 464.6L1102.4 451.1L1103.1 464.6L1103.7 446.5L1104.0 464.6L1104.5 450.1L1105.1 452.7L1105.5 449.5L1106.0 456.3L1106.4 450.1L1107.0 452.5L1107.5 434.4L1108.0 464.6L1108.7 450.5L1109.0 464.6L1109.6 435.7L1110.4 464.6L1111.1 437.0L1111.9 464.6L1112.7 443.1L1113.4 449.1L1114.1 445.8L1114.6 464.6L1115.2 448.5L1115.8 464.6L1116.2 443.7L1116.5 448.7L1117.2 435.5L1117.5 464.6L1118.3 446.3L1118.7 446.2L1119.4 442.7L1119.8 451.2L1120.2 447.8L1120.9 456.0L1121.4 448.5L1121.8 464.6L1122.4 441.8L1122.9 449.2L1123.4 445.7L1124.0 447.6L1124.6 437.5L1125.1 451.7L1125.4 439.2L1125.9 464.6L1126.6 449.7L1127.2 464.6L1127.6 444.9L1127.9 464.6L1128.4 443.5L1129.2 459.2L1129.8 432.1L1130.5 464.6L1131.0 448.9L1131.7 453.1L1132.3 433.2L1132.7 464.6L1133.2 447.7L1133.9 464.6L1134.3 446.4L1134.9 464.6L1135.4 443.8L1135.8 449.1L1136.1 435.7L1136.5 464.6L1137.2 438.6L1137.9 464.6L1138.4 445.2L1138.8 464.6L1139.5 446.8L1140.3 464.6L1140.6 439.6L1141.3 464.6L1141.6 440.9L1142.3 464.6L1143.0 447.8L1143.6 464.6L1144.3 445.8L1144.9 464.6L1145.6 437.2L1146.0 464.6L1146.3 437.9L1146.8 445.9L1147.5 434.2L1148.2 448.7L1148.5 449.7L1148.9 464.6L1149.6 441.1L1150.4 464.6L1150.7 432.2L1151.1 464.6L1151.5 448.2L1152.0 464.6L1152.5 446.4L1153.1 464.6L1153.5 441.4L1154.1 446.8L1154.7 440.5L1155.1 452.8L1155.7 441.8L1156.3 448.9L1157.0 444.7L1157.3 448.5L1157.8 437.7L1158.4 464.6L1159.2 443.2L1159.8 464.6L1160.2 438.7L1160.9 450.1L1161.2 436.0L1161.8 464.6L1162.2 447.6L1162.7 450.4L1163.0 448.1L1163.7 464.6L1164.2 434.7L1164.9 464.6L1165.7 441.6L1166.0 464.6L1166.4 443.9L1167.0 464.6L1167.3 431.7L1168.1 464.6L1168.6 447.0L1169.3 464.6L1169.8 439.1L1170.6 464.6L1171.1 431.1L1171.7 464.6L1172.2 432.1L1172.8 464.6L1173.2 443.0L1174.0 464.6L1174.7 448.0L1175.0 464.6L1175.8 432.0L1176.3 464.6L1176.9 435.2L1177.3 464.6L1177.7 437.7L1178.4 464.6L1178.8 435.4L1179.4 445.8L1179.7 447.1L1180.1 464.6L1180.6 445.7L1181.4 464.6L1182.0 444.1L1182.6 464.6L1183.0 446.4L1183.7 464.6L1184.4 436.9L1185.0 457.3" fill="none" stroke="#4a5092" stroke-width="1.0" stroke-linejoin="miter"/><path d="M776.0 454.4L778.0 464.6L779.5 451.9L780.7 459.8L783.5 449.6L785.7 464.1L787.0 452.6L789.4 460.7L792.0 458.7L793.6 464.6L795.7 446.4L798.0 464.6L799.8 455.1L801.2 464.6L803.6 458.8L805.6 461.0L807.3 445.4L809.0 464.6L810.5 459.2L813.3 464.6L815.2 452.2L816.5 459.2L819.3 457.7L821.6 464.6L823.8 459.6L825.4 464.6L826.7 458.1L827.9 464.6L830.0 452.2L832.0 458.4L834.3 456.2L836.6 464.6L838.9 449.1L840.2 459.0L842.5 440.9L844.2 458.5L847.2 441.5L849.6 464.6L851.3 452.2L852.5 464.6L854.9 457.2L857.5 464.6L859.4 450.3L861.6 464.6L863.5 458.2L865.8 464.6L867.4 454.5L868.5 464.6L869.7 446.7L870.5 453.8L871.3 443.4L872.9 457.0L874.1 450.4L875.6 459.2L876.6 442.3L877.7 464.6L878.8 442.5L879.7 464.6L880.7 454.8L882.5 462.0L884.2 456.8L884.9 464.6L885.8 440.0L887.2 464.6L888.3 455.2L889.6 464.6L890.4 456.5L891.9 464.0L893.1 441.3L894.2 464.0L895.1 448.4L896.8 464.6L897.6 454.3L898.9 464.6L900.2 453.3L901.8 464.6L902.5 447.0L903.7 464.6L904.8 439.8L906.1 452.7L907.4 440.8L909.2 464.6L910.5 440.3L911.7 464.6L912.5 451.5L913.8 453.6L915.3 448.6L916.8 464.6L918.0 445.7L918.8 455.3L919.9 443.4L921.5 452.4L922.9 445.4L924.2 464.6L925.7 453.1L926.5 464.6L927.8 450.0L928.6 464.6L929.8 442.2L930.5 451.7L931.6 445.6L933.4 463.7L935.1 449.9L936.0 454.0L936.9 452.7L937.9 463.0L938.7 438.7L939.8 464.6L941.0 437.5L942.1 464.6L943.1 442.7L944.3 440.1L945.5 428.3L946.3 464.6L947.1 429.7L948.7 464.6L949.7 431.9L950.7 442.7L952.3 416.7L954.0 440.9L955.6 423.4L956.4 464.6L957.4 422.0L957.9 464.6L958.7 424.9L959.0 464.6L959.6 423.1L960.1 464.6L960.5 429.3L961.0 464.6L961.5 421.6L962.2 464.6L962.5 426.8L963.0 443.8L963.6 432.5L964.2 464.6L964.8 427.8L965.1 438.3L965.6 429.6L966.3 439.3L966.7 439.1L967.2 436.9L967.5 438.5L967.9 451.7L968.2 435.1L968.8 464.6L969.5 431.5L969.9 464.6L970.4 438.2L970.8 464.6L971.2 435.8L971.9 464.6L972.2 438.8L972.5 464.6L973.2 435.1L974.0 464.6L974.4 438.0L974.9 464.6L975.3 445.3L976.0 464.6L976.6 452.8L977.3 459.3L977.7 452.3L978.0 464.6L978.4 451.0L979.2 464.6L979.6 439.4L980.1 460.6L980.9 453.8L981.4 464.6L982.1 443.2L982.6 464.6L983.4 437.1L984.2 464.6L984.5 440.7L985.2 464.6L986.0 437.6L986.6 464.6L987.1 451.5L987.9 458.3L988.2 439.4L988.6 464.6L989.0 454.0L989.5 456.4L990.0 453.9L990.8 464.6L991.1 450.9L991.7 464.6L992.3 439.0L992.9 451.9L993.6 436.8L994.1 464.6L994.6 451.2L995.1 464.6L995.8 436.7L996.1 464.6L996.7 436.9L997.3 464.6L997.8 453.3L998.1 464.6L998.7 450.6L999.4 464.6L999.7 448.6L1000.0 464.6L1000.4 437.1L1001.1 464.6L1001.5 437.4L1002.0 464.6L1002.5 450.4L1003.2 464.6L1003.5 441.1L1004.2 464.6L1004.7 452.8L1005.3 463.1L1006.0 443.6L1006.3 454.6L1006.8 437.6L1007.5 464.6L1007.9 453.4L1008.7 464.6L1009.5 448.7L1010.0 464.6L1010.7 452.1L1011.3 459.1L1012.1 449.2L1012.5 464.6L1013.0 446.4L1013.8 464.6L1014.5 439.2L1015.2 464.6L1015.8 445.8L1016.1 463.3L1016.5 435.8L1017.3 464.6L1017.7 453.6L1018.1 464.6L1018.5 442.5L1018.9 464.6L1019.3 450.3L1020.1 464.6L1020.9 451.0L1021.5 451.7L1022.1 441.6L1022.7 458.2L1023.2 441.1L1023.6 464.6L1024.3 441.9L1024.9 464.6L1025.4 439.2L1025.9 464.6L1026.6 442.7L1027.1 464.6L1027.7 440.6L1028.3 457.1L1028.8 448.2L1029.1 464.6L1029.8 440.5L1030.6 464.6L1031.2 437.3L1031.5 464.6L1032.1 439.2L1032.6 450.8L1033.1 440.5L1033.9 464.6L1034.3 447.3L1035.1 462.5L1035.7 438.6L1036.1 449.3L1036.7 444.9L1037.2 464.6L1037.9 449.3L1038.2 456.7L1038.9 438.9L1039.2 464.6L1040.0 447.7L1040.5 450.5L1040.8 436.3L1041.1 460.2L1041.5 446.2L1041.9 462.5L1042.3 443.9L1042.9 464.6L1043.5 448.0L1044.2 464.6L1044.6 434.7L1045.0 464.6L1045.6 441.9L1045.9 464.6L1046.3 438.0L1046.9 464.6L1047.4 450.4L1048.1 453.2L1048.5 451.3L1049.3 464.6L1049.6 446.0L1050.1 464.6L1050.5 435.5L1051.3 464.6L1051.9 449.8L1052.4 451.7L1052.8 437.6L1053.1 464.6L1053.5 436.2L1053.8 464.6L1054.5 435.9L1054.8 457.9L1055.1 443.8L1055.7 464.6L1056.2 449.8L1056.8 464.6L1057.4 436.1L1057.8 464.6L1058.4 452.5L1059.0 458.6L1059.7 436.9L1060.3 464.6L1061.0 446.2L1061.4 464.6L1061.7 452.3L1062.0 464.6L1062.5 436.7L1063.0 464.6L1063.7 448.9L1064.3 464.6L1065.0 444.3L1065.6 464.6L1066.4 448.5L1067.1 464.6L1067.5 436.9L1067.8 464.6L1068.1 445.6L1068.6 464.6L1069.2 438.5L1069.7 464.6L1070.0 436.5L1070.7 464.6L1071.3 435.1L1072.1 464.6L1072.7 444.2L1073.3 464.6L1073.9 448.5L1074.2 457.3L1074.6 446.2L1075.1 464.6L1075.8 448.4L1076.3 464.6L1077.1 448.1L1077.7 464.6L1078.2 438.2L1078.7 464.6L1079.1 449.4L1079.7 464.6L1080.5 436.5L1080.9 464.6L1081.2 434.4L1081.7 464.6L1082.5 436.5L1083.1 464.6L1083.7 450.5L1084.0 464.6L1084.3 440.8L1085.0 461.3L1085.3 445.0L1085.8 464.6L1086.5 448.3L1087.2 464.6L1087.8 450.7L1088.2 464.6L1088.6 434.8L1089.0 464.6L1089.5 450.5L1089.8 464.6L1090.3 442.0L1090.6 464.6L1091.1 448.6L1091.6 452.9L1092.0 441.3L1092.4 464.6L1093.1 438.3L1093.9 446.7L1094.3 449.2L1094.7 464.6L1095.2 439.7L1095.7 464.6L1096.1 434.3L1096.8 464.6L1097.5 433.1L1098.0 448.1L1098.7 443.5L1099.2 464.6L1099.6 444.1L1100.4 464.6L1100.9 441.2L1101.5 464.6L1101.9 435.9L1102.6 464.6L1103.0 439.7L1103.4 456.2L1103.9 440.2L1104.5 448.7L1105.3 448.7L1105.6 460.3L1105.9 437.1L1106.4 464.6L1107.1 433.4L1107.5 464.6L1108.0 436.5L1108.3 457.9L1109.0 444.3L1109.4 446.1L1109.8 438.9L1110.2 464.6L1110.8 447.8L1111.2 464.6L1111.6 435.6L1111.9 464.6L1112.4 435.2L1112.9 449.6L1113.2 440.5L1113.7 464.6L1114.4 449.9L1115.0 464.6L1115.6 448.8L1116.2 464.6L1116.8 449.8L1117.1 464.6L1117.9 449.7L1118.6 464.6L1119.2 437.0L1119.8 464.6L1120.4 450.6L1121.0 464.6L1121.4 436.5L1121.9 464.6L1122.2 444.6L1122.7 464.6L1123.0 450.3L1123.3 464.6L1124.0 446.0L1124.7 445.8L1125.4 433.7L1126.0 464.6L1126.6 436.5L1127.3 464.6L1127.7 446.7L1128.3 446.6L1129.0 439.5L1129.5 464.6L1129.8 444.2L1130.5 458.3L1131.1 448.6L1131.9 464.6L1132.7 446.8L1133.1 464.6L1133.8 441.1L1134.3 464.6L1134.9 436.9L1135.2 464.6L1135.7 448.3L1136.4 451.5L1137.1 445.6L1137.7 456.2L1138.1 441.6L1138.8 459.3L1139.1 438.5L1139.6 455.6L1139.9 437.1L1140.2 464.6L1140.9 432.8L1141.4 464.6L1142.1 438.2L1142.9 464.6L1143.5 435.6L1144.2 464.6L1144.8 437.8L1145.1 464.6L1145.8 436.8L1146.1 464.6L1146.7 433.5L1147.1 447.1L1147.7 439.9L1148.2 447.4L1148.4 435.1L1148.8 464.6L1149.2 446.0L1149.8 457.7L1150.1 447.8L1150.8 464.6L1151.3 433.4L1151.6 458.2L1152.3 444.1L1153.0 444.8L1153.6 431.4L1153.9 450.3L1154.3 442.6L1154.7 464.6L1155.4 434.4L1155.8 452.0L1156.2 439.4L1157.0 459.0L1157.4 439.8L1158.0 464.6L1158.6 432.3L1159.0 453.0L1159.5 432.4L1160.3 464.6L1160.7 438.8L1161.3 464.6L1161.7 447.6L1162.1 464.6L1162.7 433.7L1163.2 455.5L1163.7 440.7L1164.2 464.6L1164.6 431.4L1165.3 452.9L1166.0 431.1L1166.6 464.6L1167.2 438.2L1167.9 464.6L1168.6 438.1L1169.2 450.0L1169.8 431.8L1170.5 454.3L1170.8 448.4L1171.3 464.6L1171.8 439.7L1172.2 453.4L1172.8 438.9L1173.5 464.6L1173.8 437.8L1174.1 464.6L1174.6 448.1L1175.0 450.6L1175.4 439.0L1176.1 464.6L1176.6 437.2L1177.3 464.6L1178.0 448.6L1178.4 464.6L1179.0 440.3L1179.4 464.6L1179.9 431.9L1180.4 464.6L1181.0 436.9L1181.8 464.6L1182.5 437.5L1183.2 464.6L1184.0 436.6L1184.5 464.6L1184.8 445.9" fill="none" stroke="#be2c3a" stroke-width="1.05" stroke-linejoin="miter"/><path d="M956.5 59 L958.3 59 L959.2 300 L959.5 464.6 L955.8 464.6 L956.1 300 Z" fill="#8c5466"/><path d="M956.4 59 L958.2 59 L957.8 464.6 L956.4 464.6 Z" fill="#5a3846" opacity="0.8"/><line x1="1010.5" y1="415.1" x2="1010.5" y2="464.6" stroke="#8c3a48" stroke-width="1.6"/><line x1="1041.3" y1="397.0" x2="1041.3" y2="464.6" stroke="#8c3a48" stroke-width="1.6"/><line x1="1079.6" y1="403.8" x2="1079.6" y2="464.6" stroke="#8c3a48" stroke-width="1.6"/><line x1="1123.9" y1="418.1" x2="1123.9" y2="464.6" stroke="#8c3a48" stroke-width="1.6"/><line x1="1107.1" y1="427.9" x2="1107.1" y2="464.6" stroke="#8c3a48" stroke-width="1.2"/><rect x="659" y="47.2" width="526" height="417.40000000000003" fill="none" stroke="#5c5c5c" stroke-width="1.3"/><text x="655" y="63.3" text-anchor="end" class="tk">0</text><text x="655" y="87.9" text-anchor="end" class="tk">-10</text><text x="655" y="112.4" text-anchor="end" class="tk">-20</text><text x="655" y="137.0" text-anchor="end" class="tk">-30</text><text x="655" y="161.5" text-anchor="end" class="tk">-40</text><text x="655" y="186.1" text-anchor="end" class="tk">-50</text><text x="655" y="210.7" text-anchor="end" class="tk">-60</text><text x="655" y="235.2" text-anchor="end" class="tk">-70</text><text x="655" y="259.8" text-anchor="end" class="tk">-80</text><text x="655" y="284.3" text-anchor="end" class="tk">-90</text><text x="655" y="308.9" text-anchor="end" class="tk">-100</text><text x="655" y="333.5" text-anchor="end" class="tk">-110</text><text x="655" y="358.0" text-anchor="end" class="tk">-120</text><text x="655" y="382.6" text-anchor="end" class="tk">-130</text><text x="655" y="407.1" text-anchor="end" class="tk">-140</text><text x="655" y="431.7" text-anchor="end" class="tk">-150</text><text x="655" y="456.3" text-anchor="end" class="tk">-160</text><text x="659.0" y="480" text-anchor="middle" class="tk">20</text><text x="689.9" y="480" text-anchor="middle" class="tk">30</text><text x="728.8" y="480" text-anchor="middle" class="tk">50</text><text x="781.5" y="480" text-anchor="middle" class="tk">100</text><text x="834.3" y="480" text-anchor="middle" class="tk">200</text><text x="865.2" y="480" text-anchor="middle" class="tk">300</text><text x="904.1" y="480" text-anchor="middle" class="tk">500</text><text x="956.8" y="480" text-anchor="middle" class="tk">1k</text><text x="1009.6" y="480" text-anchor="middle" class="tk">2k</text><text x="1040.5" y="480" text-anchor="middle" class="tk">3k</text><text x="1079.4" y="480" text-anchor="middle" class="tk">5k</text><text x="1132.1" y="480" text-anchor="middle" class="tk">10k</text><text x="1184.9" y="480" text-anchor="middle" class="tk">20k</text></svg><div class="a" style="left:0;top:498px;width:1198px;height:3px;background:#a3a7a9"></div><div class="a" style="left:0;top:501px;width:1198px;height:7px;background:#4a7b8b"></div><div class="a" style="left:600.5px;top:503px;width:3px;height:3px;border-radius:50%;background:#b8dcea"></div><div class="a" style="left:606.5px;top:503px;width:3px;height:3px;border-radius:50%;background:#b8dcea"></div><div class="a" style="left:612.5px;top:503px;width:3px;height:3px;border-radius:50%;background:#b8dcea"></div><div class="a" style="left:1.5px;top:507px;width:1197px;height:28px;background:#d6d6d6"></div><div class="a" style="left:1195px;top:523.5px;width:3px;height:2px;background:#222"></div><div class="a" style="left:1.5px;top:508px;width:1197px;height:2px;background:#dfe6e9"></div><div class="a" style="left:1.5px;top:534px;width:1197px;height:3px;background:#a9acae"></div><div class="a" style="left:3px;top:512px"><svg width="16" height="16" viewBox="0 0 16 16"><rect width="16" height="16" fill="#16304a"/><rect x="7" y="2" width="2.2" height="12" fill="#fff"/><rect x="2" y="7" width="12" height="2.2" fill="#fff"/></svg></div><div class="a lbl" style="left:22px;top:512.8px;font-size:13.8px">Add Meter</div><div class="a" style="left:93px;top:520px;width:0;height:0;border-left:3px solid transparent;border-right:3px solid transparent;border-top:3px solid #333"></div><div class="a" style="left:107px;top:511px;width:1.5px;height:21px;background:#f2f2f2"></div><div class="a" style="left:111px;top:512px"><svg width="16" height="16" viewBox="0 0 16 16"><rect width="16" height="16" fill="#16304a"/><g fill="none" stroke="#fff" stroke-width="1.2"><ellipse cx="6" cy="4" rx="4" ry="1.6"/><path d="M2 4 V12 C2 14 10 14 10 12 V9"/><path d="M2 8 C2 10 8 10 9 9"/></g><path d="M10 5 L15 8 L10 11 Z" fill="#fff"/></svg></div><div class="a lbl" style="left:131px;top:512.8px;font-size:13.3px">Save Meter Data</div><div class="a" style="left:239.5px;top:511px;width:1.5px;height:21px;background:#f2f2f2"></div><div class="a" style="left:245px;top:512px"><svg width="16" height="16" viewBox="0 0 16 16"><rect width="16" height="16" fill="#16304a"/><path d="M5 3 L12 8 L5 13 Z" fill="#fff"/></svg></div><div class="a lbl" style="left:264px;top:512.8px;font-size:13.3px">Regulate</div><div class="a" style="left:4px;top:537px;width:588px;height:25px;background:#dde4e6"></div><div class="a" style="left:4px;top:562px;width:588px;height:1.5px;background:#b4b8ba"></div><div class="a" style="left:4px;top:563.5px;width:588px;height:134.5px;background:#e1e6e8"></div><div class="a bt" style="left:9px;top:542px;font-size:16px;letter-spacing:-0.1px">RMS Level</div><div class="a dd" style="left:96px;top:538px;width:74px;height:24px"></div><div class="a lbl" style="left:99px;top:542px;">Vrms</div><div class="a" style="left:162px;top:549px;width:0;height:0;border-left:3.0px solid transparent;border-right:3.0px solid transparent;border-top:3px solid #333"></div><div class="a" style="left:174px;top:541px"><svg width="17" height="16" viewBox="0 0 17 16"><rect width="17" height="16" fill="#142c3c"/><rect x="1.5" y="3" width="14" height="9.5" fill="#f4f8f4"/><rect x="1.5" y="5.2" width="14" height="5" fill="#34406a"/><rect x="1.5" y="8.6" width="14" height="1.6" fill="#3c5a40"/><path d="M2 10.2 L5 5.4 L8 10.2 L11 5.4 L14.5 10.2" fill="none" stroke="#d8def0" stroke-width="1.3"/></svg></div><div class="a" style="left:192.5px;top:549px;width:0;height:0;border-left:3.0px solid transparent;border-right:3.0px solid transparent;border-top:3px solid #333"></div><div class="a" style="left:205px;top:541px"><svg width="16" height="16" viewBox="0 0 16 16"><rect width="16" height="16" fill="#142c3c"/><polygon points="8.00,2.40 9.49,4.40 11.96,4.04 11.60,6.51 13.60,8.00 11.60,9.49 11.96,11.96 9.49,11.60 8.00,13.60 6.51,11.60 4.04,11.96 4.40,9.49 2.40,8.00 4.40,6.51 4.04,4.04 6.51,4.40" fill="#fff"/><circle cx="8" cy="8" r="1.7" fill="#142c3c"/></svg></div><div class="a" style="left:542px;top:537px;width:50px;height:25px;background:#e3e9eb"></div><div class="a" style="left:541px;top:539px;width:1px;height:21px;background:#c8cdd0"></div><div class="a" style="left:549px;top:542.5px"><svg width="13" height="12" viewBox="0 0 13 12"><path d="M1 2 V11 H12 V7" fill="none" stroke="#16304a" stroke-width="2"/><path d="M0 1 H3.5" stroke="#16304a" stroke-width="2"/><path d="M4.5 7.5 L10 2" stroke="#16304a" stroke-width="1.9"/><path d="M6 0.2 H12.8 V6.5 Z" fill="#16304a"/></svg></div><svg class="a" style="left:573px;top:544px" width="11" height="11"><path d="M1 1 L10 10 M10 1 L1 10" stroke="#15202a" stroke-width="1.8"/></svg><div class="a" style="left:4px;top:628.5px;width:151px;height:1.5px;background:#9fa3a5"></div><div class="a" style="left:155px;top:567px;width:428px;height:126px;background:#000"></div><div class="a" style="left:155px;top:627px;width:428px;height:5px;background:#d6d8d8;border-top:1px solid #222"></div><div class="a" style="left:156px;top:609px;width:426px;height:18px;background:#8a8a8a;border-top:1px solid #c4c4c4;border-bottom:1px solid #c4c4c4"></div><div class="a" style="left:156px;top:609px;width:325px;height:18px;background:#1cf01c;border-top:1px solid #9cf09c;border-bottom:1px solid #9cf09c"></div><div class="a" style="left:156px;top:616px;width:325px;height:3px;background:#000"></div><div class="a" style="left:156px;top:632px;width:426px;height:18px;background:#8a8a8a;border-top:1px solid #c4c4c4;border-bottom:1px solid #c4c4c4"></div><div class="a" style="left:156px;top:632px;width:325px;height:18px;background:#1cf01c;border-top:1px solid #9cf09c;border-bottom:1px solid #9cf09c"></div><div class="a" style="left:156px;top:639px;width:325px;height:3px;background:#000"></div><div class="a ch" style="left:12px;top:581px;transform:scaleX(0.9);transform-origin:0 50%">Ch1</div><div class="a" style="left:141.5px;top:593px;width:0;height:0;border-left:5.25px solid transparent;border-right:5.25px solid transparent;border-top:10.5px solid #111"></div><div class="a gtxt" style="right:735px;top:569px;transform:scaleX(0.85);transform-origin:100% 50%">5.211</div><div class="a gtxt" style="right:620px;top:569px;transform:scaleX(0.89);transform-origin:100% 50%">Vrms</div><div class="a ch" style="left:12px;top:645px;transform:scaleX(0.9);transform-origin:0 50%">Ch2</div><div class="a" style="left:141.5px;top:657px;width:0;height:0;border-left:5.25px solid transparent;border-right:5.25px solid transparent;border-top:10.5px solid #111"></div><div class="a gtxt" style="right:735px;top:651px;transform:scaleX(0.85);transform-origin:100% 50%">5.224</div><div class="a gtxt" style="right:620px;top:651px;transform:scaleX(0.89);transform-origin:100% 50%">Vrms</div><div class="a" style="left:598px;top:537px;width:589px;height:25px;background:#dde4e6"></div><div class="a" style="left:598px;top:562px;width:589px;height:1.5px;background:#b4b8ba"></div><div class="a" style="left:598px;top:563.5px;width:589px;height:134.5px;background:#e1e6e8"></div><div class="a bt" style="left:603px;top:542px;font-size:16px;letter-spacing:0.65px">THD+N Ratio</div><div class="a dd" style="left:713px;top:538px;width:76px;height:24px"></div><div class="a lbl" style="left:716px;top:542px;">%</div><div class="a" style="left:781px;top:549px;width:0;height:0;border-left:3.0px solid transparent;border-right:3.0px solid transparent;border-top:3px solid #333"></div><div class="a" style="left:793px;top:541px"><svg width="17" height="16" viewBox="0 0 17 16"><rect width="17" height="16" fill="#142c3c"/><rect x="1.5" y="3" width="14" height="9.5" fill="#f4f8f4"/><rect x="1.5" y="5.2" width="14" height="5" fill="#34406a"/><rect x="1.5" y="8.6" width="14" height="1.6" fill="#3c5a40"/><path d="M2 10.2 L5 5.4 L8 10.2 L11 5.4 L14.5 10.2" fill="none" stroke="#d8def0" stroke-width="1.3"/></svg></div><div class="a" style="left:811.5px;top:549px;width:0;height:0;border-left:3.0px solid transparent;border-right:3.0px solid transparent;border-top:3px solid #333"></div><div class="a" style="left:824px;top:541px"><svg width="16" height="16" viewBox="0 0 16 16"><rect width="16" height="16" fill="#142c3c"/><polygon points="8.00,2.40 9.49,4.40 11.96,4.04 11.60,6.51 13.60,8.00 11.60,9.49 11.96,11.96 9.49,11.60 8.00,13.60 6.51,11.60 4.04,11.96 4.40,9.49 2.40,8.00 4.40,6.51 4.04,4.04 6.51,4.40" fill="#fff"/><circle cx="8" cy="8" r="1.7" fill="#142c3c"/></svg></div><div class="a" style="left:1137px;top:537px;width:50px;height:25px;background:#e3e9eb"></div><div class="a" style="left:1136px;top:539px;width:1px;height:21px;background:#c8cdd0"></div><div class="a" style="left:1144px;top:542.5px"><svg width="13" height="12" viewBox="0 0 13 12"><path d="M1 2 V11 H12 V7" fill="none" stroke="#16304a" stroke-width="2"/><path d="M0 1 H3.5" stroke="#16304a" stroke-width="2"/><path d="M4.5 7.5 L10 2" stroke="#16304a" stroke-width="1.9"/><path d="M6 0.2 H12.8 V6.5 Z" fill="#16304a"/></svg></div><svg class="a" style="left:1168px;top:544px" width="11" height="11"><path d="M1 1 L10 10 M10 1 L1 10" stroke="#15202a" stroke-width="1.8"/></svg><div class="a" style="left:598px;top:628.5px;width:151px;height:1.5px;background:#9fa3a5"></div><div class="a" style="left:749px;top:567px;width:429px;height:126px;background:#000"></div><div class="a" style="left:749px;top:627px;width:429px;height:5px;background:#d6d8d8;border-top:1px solid #222"></div><div class="a" style="left:750px;top:609px;width:427px;height:18px;background:#8a8a8a;border-top:1px solid #c4c4c4;border-bottom:1px solid #c4c4c4"></div><div class="a" style="left:750px;top:616px;width:416px;height:3px;background:#000"></div><div class="a" style="left:750px;top:632px;width:427px;height:18px;background:#8a8a8a;border-top:1px solid #c4c4c4;border-bottom:1px solid #c4c4c4"></div><div class="a" style="left:750px;top:639px;width:416px;height:3px;background:#000"></div><div class="a ch" style="left:606px;top:581px;transform:scaleX(0.9);transform-origin:0 50%">Ch1</div><div class="a" style="left:735.5px;top:593px;width:0;height:0;border-left:5.25px solid transparent;border-right:5.25px solid transparent;border-top:10.5px solid #111"></div><div class="a gtxt" style="right:75px;top:569px;transform:scaleX(0.85);transform-origin:100% 50%">0.000044</div><div class="a gtxt" style="right:24px;top:569px;transform:scaleX(0.89);transform-origin:100% 50%">%</div><div class="a ch" style="left:606px;top:645px;transform:scaleX(0.9);transform-origin:0 50%">Ch2</div><div class="a" style="left:735.5px;top:657px;width:0;height:0;border-left:5.25px solid transparent;border-right:5.25px solid transparent;border-top:10.5px solid #111"></div><div class="a gtxt" style="right:75px;top:651px;transform:scaleX(0.85);transform-origin:100% 50%">0.000048</div><div class="a gtxt" style="right:24px;top:651px;transform:scaleX(0.89);transform-origin:100% 50%">%</div><div class="a" style="left:4px;top:704px;width:588px;height:25px;background:#dde4e6"></div><div class="a" style="left:4px;top:729px;width:588px;height:1.5px;background:#b4b8ba"></div><div class="a" style="left:4px;top:730.5px;width:588px;height:134.5px;background:#e1e6e8"></div><div class="a bt" style="left:9px;top:709px;font-size:16px;letter-spacing:0.0px">Frequency</div><div class="a dd" style="left:96px;top:705px;width:75px;height:24px"></div><div class="a lbl" style="left:99px;top:709px;">Hz</div><div class="a" style="left:163px;top:716px;width:0;height:0;border-left:3.0px solid transparent;border-right:3.0px solid transparent;border-top:3px solid #333"></div><div class="a" style="left:175px;top:708px"><svg width="17" height="16" viewBox="0 0 17 16"><rect width="17" height="16" fill="#142c3c"/><rect x="1.5" y="3" width="14" height="9.5" fill="#f4f8f4"/><rect x="1.5" y="5.2" width="14" height="5" fill="#34406a"/><rect x="1.5" y="8.6" width="14" height="1.6" fill="#3c5a40"/><path d="M2 10.2 L5 5.4 L8 10.2 L11 5.4 L14.5 10.2" fill="none" stroke="#d8def0" stroke-width="1.3"/></svg></div><div class="a" style="left:193.5px;top:716px;width:0;height:0;border-left:3.0px solid transparent;border-right:3.0px solid transparent;border-top:3px solid #333"></div><div class="a" style="left:206px;top:708px"><svg width="16" height="16" viewBox="0 0 16 16"><rect width="16" height="16" fill="#142c3c"/><polygon points="8.00,2.40 9.49,4.40 11.96,4.04 11.60,6.51 13.60,8.00 11.60,9.49 11.96,11.96 9.49,11.60 8.00,13.60 6.51,11.60 4.04,11.96 4.40,9.49 2.40,8.00 4.40,6.51 4.04,4.04 6.51,4.40" fill="#fff"/><circle cx="8" cy="8" r="1.7" fill="#142c3c"/></svg></div><div class="a" style="left:542px;top:704px;width:50px;height:25px;background:#e3e9eb"></div><div class="a" style="left:541px;top:706px;width:1px;height:21px;background:#c8cdd0"></div><div class="a" style="left:549px;top:709.5px"><svg width="13" height="12" viewBox="0 0 13 12"><path d="M1 2 V11 H12 V7" fill="none" stroke="#16304a" stroke-width="2"/><path d="M0 1 H3.5" stroke="#16304a" stroke-width="2"/><path d="M4.5 7.5 L10 2" stroke="#16304a" stroke-width="1.9"/><path d="M6 0.2 H12.8 V6.5 Z" fill="#16304a"/></svg></div><svg class="a" style="left:573px;top:711px" width="11" height="11"><path d="M1 1 L10 10 M10 1 L1 10" stroke="#15202a" stroke-width="1.8"/></svg><div class="a" style="left:4px;top:795.5px;width:151px;height:1.5px;background:#9fa3a5"></div><div class="a" style="left:155px;top:734px;width:428px;height:126px;background:#000"></div><div class="a" style="left:155px;top:794px;width:428px;height:5px;background:#d6d8d8;border-top:1px solid #222"></div><div class="a" style="left:156px;top:776px;width:426px;height:18px;background:#8a8a8a;border-top:1px solid #c4c4c4;border-bottom:1px solid #c4c4c4"></div><div class="a" style="left:156px;top:776px;width:243px;height:18px;background:#1cf01c;border-top:1px solid #9cf09c;border-bottom:1px solid #9cf09c"></div><div class="a" style="left:156px;top:783px;width:390px;height:3px;background:#000"></div><div class="a" style="left:156px;top:799px;width:426px;height:18px;background:#8a8a8a;border-top:1px solid #c4c4c4;border-bottom:1px solid #c4c4c4"></div><div class="a" style="left:156px;top:799px;width:243px;height:18px;background:#1cf01c;border-top:1px solid #9cf09c;border-bottom:1px solid #9cf09c"></div><div class="a" style="left:156px;top:806px;width:390px;height:3px;background:#000"></div><div class="a ch" style="left:12px;top:748px;transform:scaleX(0.9);transform-origin:0 50%">Ch1</div><div class="a" style="left:141.5px;top:760px;width:0;height:0;border-left:5.25px solid transparent;border-right:5.25px solid transparent;border-top:10.5px solid #111"></div><div class="a gtxt" style="right:704px;top:736px;transform:scaleX(0.85);transform-origin:100% 50%">0.99998</div><div class="a gtxt" style="right:618px;top:736px;transform:scaleX(0.89);transform-origin:100% 50%">kHz</div><div class="a ch" style="left:12px;top:812px;transform:scaleX(0.9);transform-origin:0 50%">Ch2</div><div class="a" style="left:141.5px;top:824px;width:0;height:0;border-left:5.25px solid transparent;border-right:5.25px solid transparent;border-top:10.5px solid #111"></div><div class="a gtxt" style="right:704px;top:818px;transform:scaleX(0.85);transform-origin:100% 50%">0.99998</div><div class="a gtxt" style="right:618px;top:818px;transform:scaleX(0.89);transform-origin:100% 50%">kHz</div><div class="a" style="left:598px;top:704px;width:589px;height:25px;background:#dde4e6"></div><div class="a" style="left:598px;top:729px;width:589px;height:1.5px;background:#b4b8ba"></div><div class="a" style="left:598px;top:730.5px;width:589px;height:134.5px;background:#e1e6e8"></div><div class="a bt" style="left:603px;top:709px;font-size:16px;letter-spacing:0.6px">SINAD</div><div class="a dd" style="left:660px;top:705px;width:77px;height:24px"></div><div class="a lbl" style="left:663px;top:709px;">dB</div><div class="a" style="left:729px;top:716px;width:0;height:0;border-left:3.0px solid transparent;border-right:3.0px solid transparent;border-top:3px solid #333"></div><div class="a" style="left:741px;top:708px"><svg width="17" height="16" viewBox="0 0 17 16"><rect width="17" height="16" fill="#142c3c"/><rect x="1.5" y="3" width="14" height="9.5" fill="#f4f8f4"/><rect x="1.5" y="5.2" width="14" height="5" fill="#34406a"/><rect x="1.5" y="8.6" width="14" height="1.6" fill="#3c5a40"/><path d="M2 10.2 L5 5.4 L8 10.2 L11 5.4 L14.5 10.2" fill="none" stroke="#d8def0" stroke-width="1.3"/></svg></div><div class="a" style="left:759.5px;top:716px;width:0;height:0;border-left:3.0px solid transparent;border-right:3.0px solid transparent;border-top:3px solid #333"></div><div class="a" style="left:772px;top:708px"><svg width="16" height="16" viewBox="0 0 16 16"><rect width="16" height="16" fill="#142c3c"/><polygon points="8.00,2.40 9.49,4.40 11.96,4.04 11.60,6.51 13.60,8.00 11.60,9.49 11.96,11.96 9.49,11.60 8.00,13.60 6.51,11.60 4.04,11.96 4.40,9.49 2.40,8.00 4.40,6.51 4.04,4.04 6.51,4.40" fill="#fff"/><circle cx="8" cy="8" r="1.7" fill="#142c3c"/></svg></div><div class="a" style="left:1137px;top:704px;width:50px;height:25px;background:#e3e9eb"></div><div class="a" style="left:1136px;top:706px;width:1px;height:21px;background:#c8cdd0"></div><div class="a" style="left:1144px;top:709.5px"><svg width="13" height="12" viewBox="0 0 13 12"><path d="M1 2 V11 H12 V7" fill="none" stroke="#16304a" stroke-width="2"/><path d="M0 1 H3.5" stroke="#16304a" stroke-width="2"/><path d="M4.5 7.5 L10 2" stroke="#16304a" stroke-width="1.9"/><path d="M6 0.2 H12.8 V6.5 Z" fill="#16304a"/></svg></div><svg class="a" style="left:1168px;top:711px" width="11" height="11"><path d="M1 1 L10 10 M10 1 L1 10" stroke="#15202a" stroke-width="1.8"/></svg><div class="a" style="left:598px;top:795.5px;width:151px;height:1.5px;background:#9fa3a5"></div><div class="a" style="left:749px;top:734px;width:429px;height:126px;background:#000"></div><div class="a" style="left:749px;top:794px;width:429px;height:5px;background:#d6d8d8;border-top:1px solid #222"></div><div class="a" style="left:750px;top:776px;width:427px;height:18px;background:#8a8a8a;border-top:1px solid #c4c4c4;border-bottom:1px solid #c4c4c4"></div><div class="a" style="left:750px;top:776px;width:428px;height:18px;background:#1cf01c;border-top:1px solid #9cf09c;border-bottom:1px solid #9cf09c"></div><div class="a" style="left:760px;top:783px;width:416px;height:3px;background:#000"></div><div class="a" style="left:750px;top:799px;width:427px;height:18px;background:#8a8a8a;border-top:1px solid #c4c4c4;border-bottom:1px solid #c4c4c4"></div><div class="a" style="left:750px;top:799px;width:428px;height:18px;background:#1cf01c;border-top:1px solid #9cf09c;border-bottom:1px solid #9cf09c"></div><div class="a" style="left:760px;top:806px;width:416px;height:3px;background:#000"></div><div class="a ch" style="left:606px;top:748px;transform:scaleX(0.9);transform-origin:0 50%">Ch1</div><div class="a" style="left:735.5px;top:760px;width:0;height:0;border-left:5.25px solid transparent;border-right:5.25px solid transparent;border-top:10.5px solid #111"></div><div class="a gtxt" style="right:89px;top:736px;transform:scaleX(0.85);transform-origin:100% 50%">127.116</div><div class="a gtxt" style="right:24px;top:736px;transform:scaleX(0.89);transform-origin:100% 50%">dB</div><div class="a ch" style="left:606px;top:812px;transform:scaleX(0.9);transform-origin:0 50%">Ch2</div><div class="a" style="left:735.5px;top:824px;width:0;height:0;border-left:5.25px solid transparent;border-right:5.25px solid transparent;border-top:10.5px solid #111"></div><div class="a gtxt" style="right:89px;top:818px;transform:scaleX(0.85);transform-origin:100% 50%">126.347</div><div class="a gtxt" style="right:24px;top:818px;transform:scaleX(0.89);transform-origin:100% 50%">dB</div><div class="a" style="left:0;top:874px;width:1198px;height:188px;background:radial-gradient(ellipse 60% 130% at 50% 5%, #474747 0%, #3d3d3d 45%, #2d2d2d 100%)"></div><div class="a" style="left:4px;top:865px;width:1194px;height:7.5px;background:#b2b3b5"></div><div class="a" style="left:0;top:872px;width:592px;height:2px;background:#222"></div><div class="a" style="left:278px;top:935.5px;width:200px;text-align:center;font-size:53px;line-height:60px;color:#f2f2f2;-webkit-text-stroke:1.0px #424242;transform:scaleX(0.87)">SINAD</div><div class="a" style="left:268px;top:997px;width:220px;text-align:center;font-size:30.5px;line-height:36px;color:#f0f0f0;">126dB @1kHz</div><div class="a" style="left:528.5px;top:932px;width:3px;height:106px;background:#e8e8e8"></div><div class="a" style="left:547px;top:936px;width:400px;text-align:center;font-size:53px;line-height:60px;color:#f2f2f2;-webkit-text-stroke:1.0px #424242;transform:scaleX(0.95)">Dynamic range</div><div class="a" style="left:637px;top:997px;width:220px;text-align:center;font-size:30.5px;line-height:36px;color:#f0f0f0;">134dB @1kHz</div></body></html>
